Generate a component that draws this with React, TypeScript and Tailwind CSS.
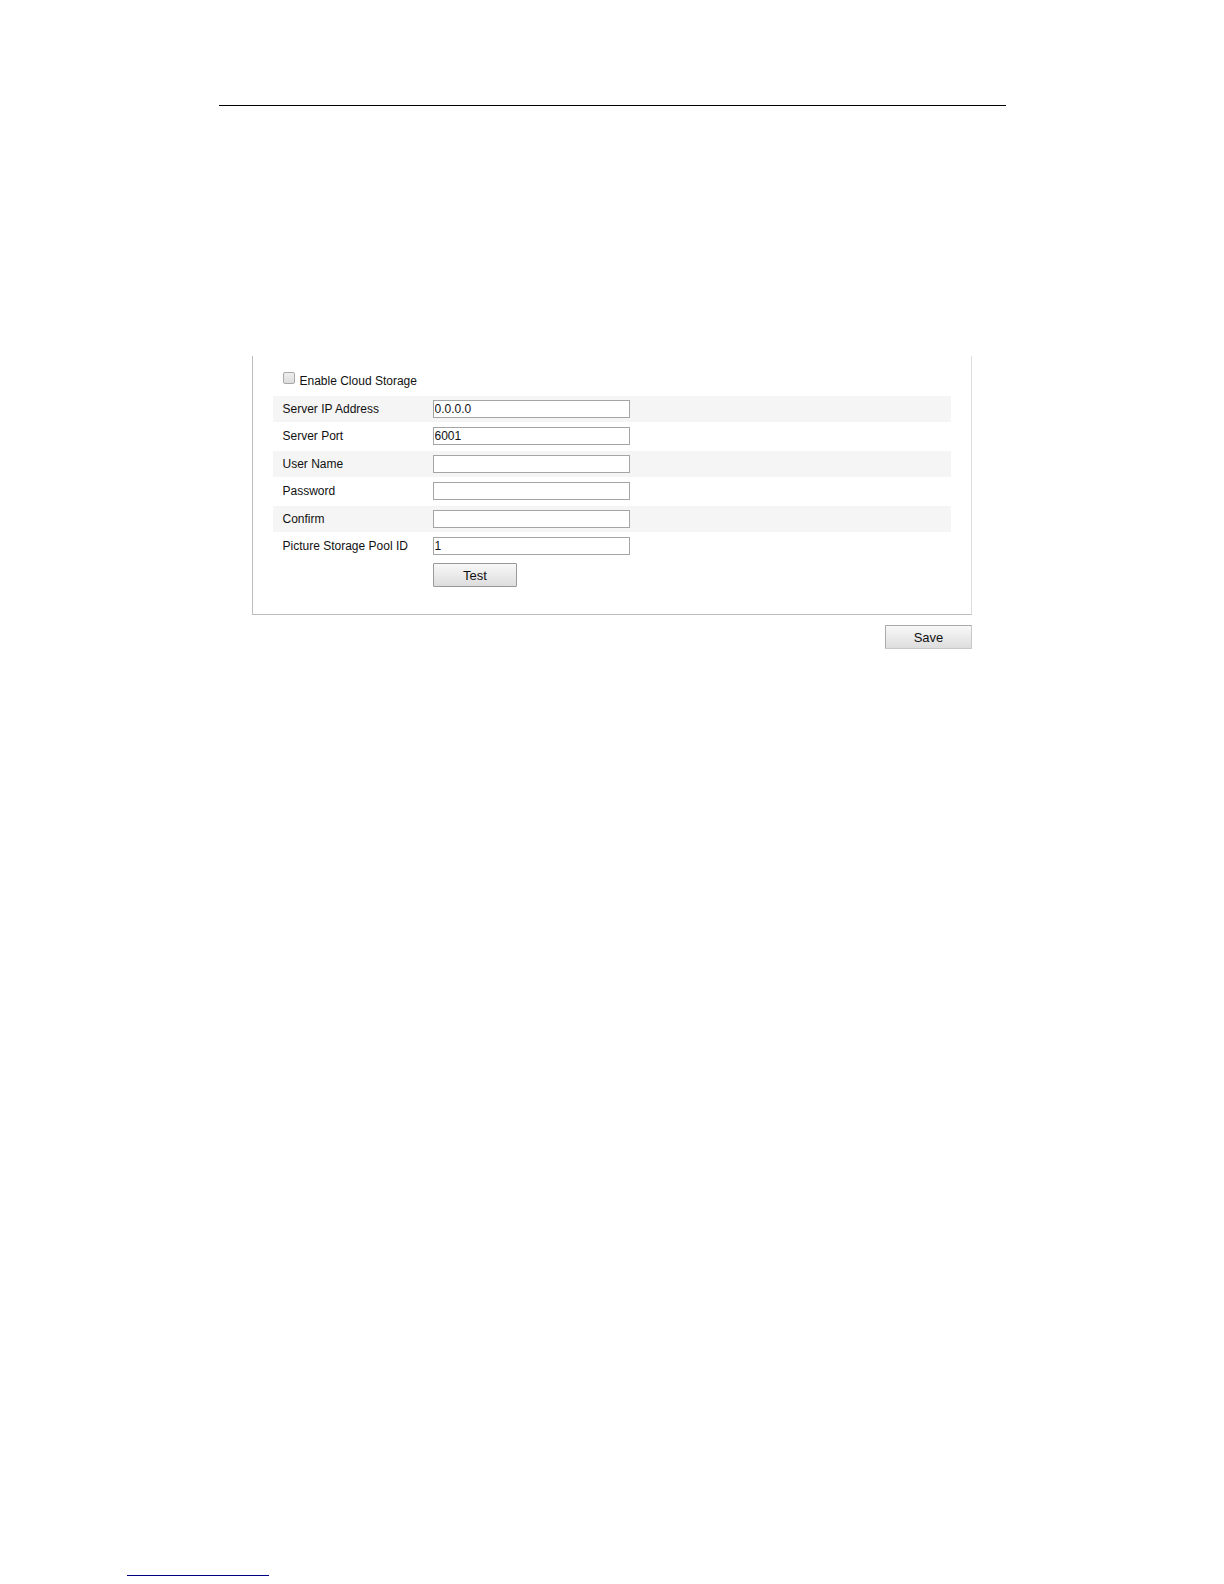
import { useState } from 'react';

interface Field {
  id: string;
  label: string;
  type: string;
  value: string;
}

const initialFields: Field[] = [
  { id: 'server-ip', label: 'Server IP Address', type: 'text', value: '0.0.0.0' },
  { id: 'server-port', label: 'Server Port', type: 'text', value: '6001' },
  { id: 'user-name', label: 'User Name', type: 'text', value: '' },
  { id: 'password', label: 'Password', type: 'password', value: '' },
  { id: 'confirm', label: 'Confirm', type: 'password', value: '' },
  { id: 'pool-id', label: 'Picture Storage Pool ID', type: 'text', value: '1' },
];

const buttonClass =
  'h-6 rounded-[1px] border bg-linear-to-b from-[#f8f8f8] to-[#dddddd] pt-px pl-px text-[13px] leading-4 text-[#111111]';

const App = () => {
  const [enabled, setEnabled] = useState(false);
  const [fields, setFields] = useState(initialFields);

  const updateField = (id: string, value: string) => {
    setFields(fields.map((field) => (field.id === id ? { ...field, value } : field)));
  };

  return (
    <div className="flex min-h-screen flex-col bg-white font-['Liberation_Sans',Arial,sans-serif] text-xs text-[#111111]">
      <main className="mx-auto w-full max-w-[787px] pt-[105px]">
        <hr className="border-t border-black" />

        <form className="mt-[250px] pr-[34px] pl-[33px]" onSubmit={(e) => e.preventDefault()}>
          <div className="border border-t-0 border-[#bdbdbd] border-r-[#dddddd] px-5 pt-4 pb-[27px]">
            <div className="flex h-6 items-start pl-[10px]">
              <input
                id="enable-cloud"
                type="checkbox"
                checked={enabled}
                onChange={(e) => setEnabled(e.target.checked)}
                className="size-3 appearance-none rounded-xs border border-[#a8a8a8] bg-linear-to-b from-[#eeeeee] to-[#dcdcdc] checked:bg-[#777777]"
              />
              <label htmlFor="enable-cloud" className="pt-px pl-[5px] leading-4">
                Enable Cloud Storage
              </label>
            </div>

            <div>
              {fields.map((field) => (
                <div
                  key={field.id}
                  className="flex h-[26px] items-start bg-[#f5f5f5] pt-1 pl-[10px] even:h-[29px] even:bg-white even:pt-[5px]"
                >
                  <label htmlFor={field.id} className="w-[150px] shrink-0 leading-[18px]">
                    {field.label}
                  </label>
                  <input
                    id={field.id}
                    type={field.type}
                    value={field.value}
                    onChange={(e) => updateField(field.id, e.target.value)}
                    className="h-[18px] w-[197px] border border-[#a5a5a5] bg-white px-px leading-4"
                  />
                </div>
              ))}
            </div>

            <button type="button" className={`${buttonClass} mt-[2px] ml-40 w-[84px] border-[#999999]`}>
              Test
            </button>
          </div>

          <div className="mt-[10px] flex justify-end">
            <button type="submit" className={`${buttonClass} w-[87px] border-[#c8c8c8] border-t-[#aaaaaa] border-l-[#aaaaaa]`}>
              Save
            </button>
          </div>
        </form>
      </main>

      <footer className="mt-auto pb-2 pl-[127px]">
        <div className="w-[142px] border-t border-[#000080]" />
      </footer>
    </div>
  );
};

export default App;
